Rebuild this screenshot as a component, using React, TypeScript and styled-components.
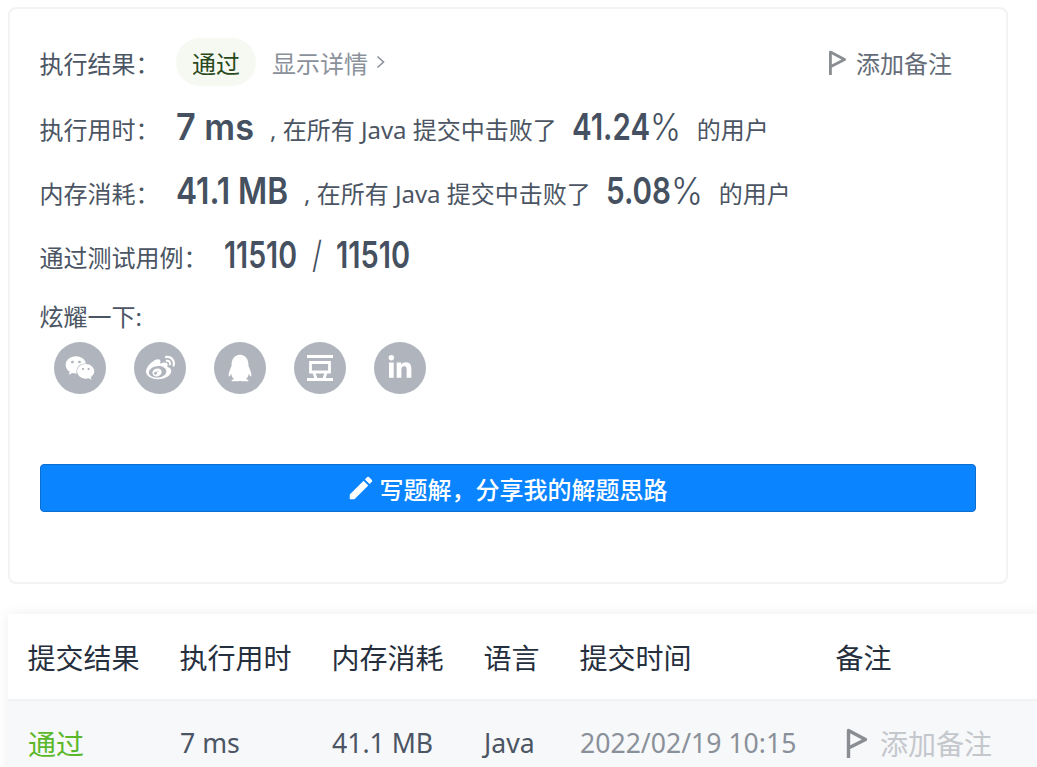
import React, { useLayoutEffect, useRef } from "react";
import styled, { createGlobalStyle } from "styled-components";
import { FaWeixin, FaWeibo, FaLinkedinIn } from "react-icons/fa";
import { RiQqFill } from "react-icons/ri";
import { MdEdit } from "react-icons/md";

const Global = createGlobalStyle`
  html, body { margin: 0; padding: 0; background: #fff; overflow: hidden; }
  body { font-family: "Noto Sans", "Noto Sans CJK SC", sans-serif; color: #4a5361; }
`;

const Page = styled.div`
  width: 1037px;
  height: 767px;
  overflow: hidden;
  padding-top: 7px;
  box-sizing: border-box;
`;

const Card = styled.section`
  width: 1000px;
  height: 577px;
  margin-left: 8px;
  box-sizing: border-box;
  border: 2px solid #f2f3f5;
  border-radius: 8px;
  padding: 29px 30px 0;
`;

const TopRow = styled.div`
  display: flex;
  align-items: center;
  height: 48px;
  font-size: 24px;
`;

const Label = styled.span<{ $w?: number }>`
  width: ${(p) => p.$w ?? 136.5}px;
  margin-left: -0.5px;
  flex: none;
  font-size: 24px;
  color: #4b5563;
`;

const Pill = styled.span`
  width: 80px;
  height: 48px;
  border-radius: 24px;
  background: #f5f9f1;
  color: #2a4a1c;
  display: flex;
  align-items: center;
  justify-content: center;
  font-size: 24px;
`;

const Details = styled.span`
  margin-left: 16px;
  display: flex;
  align-items: center;
  gap: 8px;
  color: #8b919b;
`;

const Note = styled.span`
  margin-left: auto;
  margin-right: 24px;
  display: flex;
  align-items: center;
  gap: 9px;
  color: #646c78;
`;

const Stat = styled.div<{ $top?: number }>`
  display: flex;
  align-items: baseline;
  height: 64px;
  line-height: 64px;
  font-size: 24px;
  white-space: pre;
  margin-top: ${(p) => p.$top ?? 0}px;
`;

const BigBox = styled.span<{ $w: number; $thin?: boolean }>`
  display: inline-block;
  flex: none;
  width: ${(p) => p.$w}px;
  font-family: "Inter", "Roboto", sans-serif;
  font-size: 37px;
  font-weight: ${(p) => (p.$thin ? 300 : 600)};
  color: #455060;
  white-space: pre;
  transform-origin: left center;
`;

/* The reference uses a condensed DIN face: an installed face is narrowed to the measured width. */
const Big = ({ w, thin, children }: { w: number; thin?: boolean; children: string }) => {
  const ref = useRef<HTMLSpanElement>(null);
  useLayoutEffect(() => {
    const el = ref.current;
    if (!el) return;
    const range = document.createRange();
    range.selectNodeContents(el);
    el.style.transform = `translateY(1px) scaleX(${w / range.getBoundingClientRect().width})`;
  }, [w]);
  return (
    <BigBox ref={ref} $w={w} $thin={thin}>
      {children}
    </BigBox>
  );
};

const Small = styled.span<{ $l?: number }>`
  margin-left: ${(p) => p.$l ?? 16}px;
  color: #4b5563;
`;

const Gap = styled.span<{ $w: number }>`
  flex: none;
  width: ${(p) => p.$w}px;
`;

const Share = styled.div`
  margin-top: 13px;
  margin-left: -0.5px;
  font-size: 24px;
  line-height: 36px;
  color: #4b5563;
`;

const Socials = styled.div`
  display: flex;
  gap: 28px;
  margin: 7px 0 0 14px;
`;

const Circle = styled.span<{ $size?: number }>`
  width: 52px;
  height: 52px;
  border-radius: 50%;
  background: #b0b4bd;
  color: #fff;
  display: flex;
  align-items: center;
  justify-content: center;
  font-size: ${(p) => p.$size ?? 28}px;
`;

const WriteButton = styled.button`
  display: flex;
  align-items: center;
  justify-content: center;
  gap: 4px;
  width: 936px;
  height: 48px;
  margin-top: 70px;
  padding: 0 3px 0 0;
  box-sizing: border-box;
  border: 1px solid #0b6fd0;
  border-radius: 4px;
  background: #0a84ff;
  color: #fff;
  font-family: inherit;
  font-size: 24px;
  font-weight: 500;
`;

const TableBox = styled.div`
  margin: 30px 0 0 8px;
  width: 1040px;
  box-shadow: 0 0 12px rgba(0, 0, 0, 0.07);
  background: #fff;
`;

const Grid = styled.div`
  display: grid;
  grid-template-columns: 152px 152px 152px 96px 256px 1fr;
  padding-left: 20px;
  align-items: center;
`;

const HeadRow = styled(Grid)`
  height: 85px;
  padding-left: 19.5px;
  border-bottom: 2px solid #f1f2f4;
  font-size: 28px;
  color: #262f3d;
`;

const BodyRow = styled(Grid)`
  height: 84px;
  background: #f7f8fa;
  font-size: 26.6px;
  color: #4b5563;
`;

const Pass = styled.span`
  color: #5cb82b;
  font-size: 28px;
`;

const Date_ = styled.span`
  color: #8a9099;
`;

const NoteCell = styled.span`
  display: flex;
  align-items: center;
  gap: 12px;
  margin-left: 10px;
  font-size: 28px;
  color: #c4c7cc;
`;

const Flag = ({ w, h, c }: { w: number; h: number; c: string }) => (
  <svg width={w} height={h} viewBox="0 0 22 30" fill="none" stroke={c} strokeWidth="3.4">
    <path d="M2.5 30V2.5L19.5 11.5L2.5 20" strokeLinejoin="round" />
  </svg>
);

const Chevron = () => (
  <svg width="9" height="14" viewBox="0 0 9 14" fill="none" stroke="#8b919b" strokeWidth="1.6">
    <path d="M1.5 1.5L7.5 7L1.5 12.5" />
  </svg>
);

const DoubanIcon = () => (
  <svg width="26" height="26" viewBox="0 0 26 26" fill="none" stroke="#fff" strokeWidth="2.8">
    <path d="M0 1.5H26M0 24.5H26" />
    <path d="M3.5 7.5H22.5V17H3.5Z" />
    <path d="M7 18L9.2 24M19 18L16.8 24" />
  </svg>
);

export default function App() {
  return (
    <Page>
      <Global />
      <Card>
        <TopRow>
          <Label>执行结果：</Label>
          <Pill>通过</Pill>
          <Details>
            显示详情
            <Chevron />
          </Details>
          <Note>
            <Flag w={19} h={25} c="#8a8d92" />
            添加备注
          </Note>
        </TopRow>
        <Stat $top={8}>
          <Label>执行用时：</Label>
          <Big w={78}>7 ms</Big>
          <Small>, 在所有 Java 提交中击败了</Small>
          <Gap $w={15} />
          <Big w={78}>41.24</Big>
          <Big w={31} thin>%</Big>
          <Small>的用户</Small>
        </Stat>
        <Stat>
          <Label>内存消耗：</Label>
          <Big w={112}>41.1 MB</Big>
          <Small>, 在所有 Java 提交中击败了</Small>
          <Gap $w={15} />
          <Big w={65}>5.08</Big>
          <Big w={32} thin>%</Big>
          <Small>的用户</Small>
        </Stat>
        <Stat>
          <Label $w={184.5}>通过测试用例：</Label>
          <Big w={73}>11510</Big>
          <Gap $w={15} />
          <Big w={10} thin>/</Big>
          <Gap $w={14} />
          <Big w={74}>11510</Big>
        </Stat>
        <Share>炫耀一下:</Share>
        <Socials>
          <Circle $size={30}><FaWeixin /></Circle>
          <Circle $size={29}><FaWeibo /></Circle>
          <Circle $size={32}><RiQqFill /></Circle>
          <Circle><DoubanIcon /></Circle>
          <Circle $size={26}><FaLinkedinIn /></Circle>
        </Socials>
        <WriteButton>
          <MdEdit size={30} />
          写题解，分享我的解题思路
        </WriteButton>
      </Card>
      <TableBox>
        <HeadRow>
          <span>提交结果</span>
          <span>执行用时</span>
          <span>内存消耗</span>
          <span>语言</span>
          <span>提交时间</span>
          <span>备注</span>
        </HeadRow>
        <BodyRow>
          <Pass>通过</Pass>
          <span>7 ms</span>
          <span>41.1 MB</span>
          <span>Java</span>
          <Date_>2022/02/19 10:15</Date_>
          <NoteCell>
            <Flag w={22} h={30} c="#8a8d92" />
            添加备注
          </NoteCell>
        </BodyRow>
      </TableBox>
    </Page>
  );
}
